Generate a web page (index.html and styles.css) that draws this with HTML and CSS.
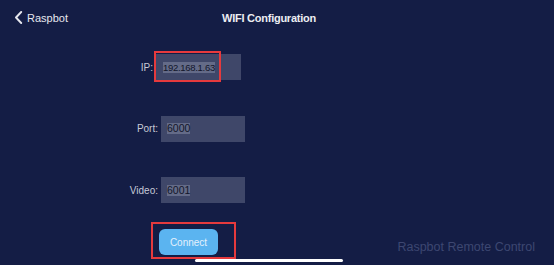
FILE: index.html
```html
<!DOCTYPE html>
<html lang="en">
<head>
<meta charset="utf-8">
<title>WIFI Configuration</title>
<link rel="stylesheet" href="styles.css">
</head>
<body>
<div class="screen">
  <header class="nav">
    <a class="back" href="#">
      <svg class="chevron" width="9" height="13" viewBox="0 0 9 13" aria-hidden="true"><polyline points="7.2,1 2,6.5 7.2,12" fill="none" stroke="currentColor" stroke-width="1.9" stroke-linecap="round" stroke-linejoin="round"/></svg>
      <span>Raspbot</span>
    </a>
    <h1 class="title">WIFI Configuration</h1>
  </header>

  <main class="form">
    <div class="row row-ip">
      <label class="label">IP:</label>
      <div class="field field-ip">
        <span class="sel sel-ip">192.168.1.63</span>
        <span class="mark mark-ip"></span>
      </div>
    </div>
    <div class="row">
      <label class="label">Port:</label>
      <div class="field"><span class="sel">6000</span></div>
    </div>
    <div class="row">
      <label class="label">Video:</label>
      <div class="field"><span class="sel">6001</span></div>
    </div>
  </main>

  <footer class="bottom">
    <div class="connect-wrap">
      <button class="connect">Connect</button>
      <span class="mark mark-connect"></span>
    </div>
    <span class="brand">Raspbot Remote Control</span>
  </footer>

  <div class="home-indicator"></div>
</div>
</body>
</html>
```

FILE: styles.css
```css
* { box-sizing: border-box; }

html, body {
  margin: 0;
  padding: 0;
  background: #141d45;
}

.screen {
  position: relative;
  width: 554px;
  height: 265px;
  overflow: hidden;
  background: #141d45;
  font-family: "Liberation Sans", Arial, sans-serif;
  color: #e9eaf0;
}

.nav {
  display: grid;
  grid-template-columns: 1fr auto 1fr;
  align-items: center;
  height: 36px;
  padding: 0 30px 0 14px;
}

.back {
  display: flex;
  align-items: center;
  gap: 4px;
  color: #e6e7ee;
  text-decoration: none;
  font-size: 11px;
  margin-top: -1px;
}

.chevron { display: block; }

.title {
  margin: 0;
  font-size: 11px;
  font-weight: 700;
  letter-spacing: -0.25px;
  color: #ecedf2;
  margin-top: -1px;
}

.form {
  display: flex;
  flex-direction: column;
  gap: 35.5px;
  padding-top: 18px;
}

.row {
  display: grid;
  grid-template-columns: 158px 84px;
  column-gap: 3px;
  align-items: center;
  height: 26px;
}

.label {
  justify-self: end;
  font-size: 10px;
  color: #c6c9d6;
}

.field {
  position: relative;
  display: flex;
  align-items: center;
  height: 26px;
  padding-left: 6px;
  background: #3f4769;
}

.row-ip .label { margin-right: 5px; }

.field-ip {
  margin-left: -7px;
  width: 87px;
  padding-left: 9px;
}

.sel {
  display: inline-block;
  height: 11px;
  line-height: 11px;
  font-size: 10.5px;
  color: #12162a;
  background: #646b88;
}

.sel-ip {
  font-size: 9.5px;
  letter-spacing: -0.3px;
}

.mark {
  position: absolute;
  border: 2px solid #e63a3d;
  pointer-events: none;
}

.mark-ip {
  left: 0;
  top: -3px;
  width: 67px;
  height: 31px;
}

.bottom {
  display: flex;
  align-items: center;
  justify-content: space-between;
  margin-top: 26px;
  padding: 0 19px 0 159px;
}

.connect-wrap {
  position: relative;
}

.connect {
  display: block;
  width: 59px;
  height: 26px;
  border: 0;
  border-radius: 6px;
  background: #5bb4f0;
  color: #e4f1fd;
  font-family: inherit;
  font-size: 10px;
  padding: 0;
}

.mark-connect {
  top: -7px;
  left: -8px;
  right: -18px;
  bottom: -4px;
}

.brand {
  font-size: 12.5px;
  color: #3d4771;
  margin-top: 10px;
}

.home-indicator {
  position: absolute;
  left: 195px;
  bottom: 3px;
  width: 148px;
  height: 3px;
  border-radius: 2px;
  background: #ffffff;
}
```
